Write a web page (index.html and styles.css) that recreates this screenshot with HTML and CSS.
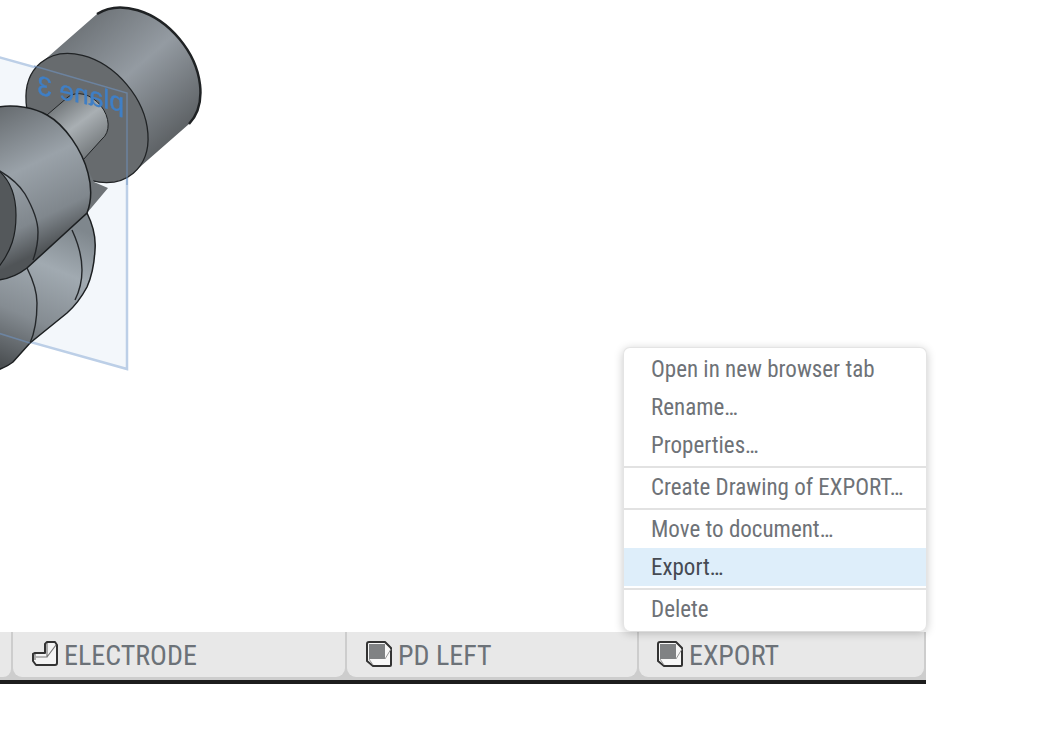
FILE: index.html
```html
<!DOCTYPE html>
<html lang="en">
<head>
<meta charset="utf-8">
<title>Part Studio</title>
<link rel="stylesheet" href="styles.css">
</head>
<body>
<main class="app">
  <section class="viewport">
    <svg class="scene" viewBox="0 0 1053 632" width="1053" height="632" aria-hidden="true">
      <defs>
        <linearGradient id="barrel" gradientUnits="userSpaceOnUse" x1="60" y1="20" x2="172" y2="150">
          <stop offset="0" stop-color="#666b6f"/>
          <stop offset="0.5" stop-color="#949ba2"/>
          <stop offset="1" stop-color="#585c5f"/>
        </linearGradient>
        <linearGradient id="collar" gradientUnits="userSpaceOnUse" x1="10" y1="100" x2="75" y2="235">
          <stop offset="0" stop-color="#656a6e"/>
          <stop offset="0.45" stop-color="#9aa2a9"/>
          <stop offset="0.8" stop-color="#80878d"/>
          <stop offset="1" stop-color="#505457"/>
        </linearGradient>
        <linearGradient id="lower" gradientUnits="userSpaceOnUse" x1="70" y1="225" x2="10" y2="368">
          <stop offset="0" stop-color="#7f878d"/>
          <stop offset="0.3" stop-color="#a1aab1"/>
          <stop offset="0.65" stop-color="#858c92"/>
          <stop offset="1" stop-color="#4b4f52"/>
        </linearGradient>
        <linearGradient id="neck" gradientUnits="userSpaceOnUse" x1="58" y1="100" x2="95" y2="150">
          <stop offset="0" stop-color="#6e7376"/>
          <stop offset="0.5" stop-color="#a9afb3"/>
          <stop offset="1" stop-color="#777c7f"/>
        </linearGradient>
      </defs>
      <polygon class="plane" points="-2,57 127,93 127,369 -2,333"/>
      <path class="lower" d="M87 213 C93 225 96 238 95 250 C94 268 91 278 87 287 C80 300 75 306 67 313 L30 343 L13 362 C8 366 3 368 -2 370 L-2 280 Z"/>
      <path class="edge" d="M72 230 C79 245 82 258 82 270 C82 282 79 292 75 300"/>
      <path class="edge" d="M27 268 C33 280 37 292 37 303 C37 320 35 332 30 343"/>
      <path class="barrel" d="M41 63 L97 14 A72 52 50 0 1 189 124 L133 173 Z"/>
      <path class="rim" d="M97 14 A72 52 50 0 1 189 124"/>
      <ellipse class="face" cx="87" cy="118" rx="72" ry="52" transform="rotate(50 87 118)"/>
      <path class="neck" d="M68 97 A27 20 50 0 1 102 139 L83 160 L47 115 Z"/>
      <path class="shoulder" d="M86 166 L94 182 L108 188 L87 213 Z"/>
      <path class="collar" d="M-2 107 C15 104 35 108 47 115 C65 125 82 150 88 173 C92 188 92 200 87 213 L27 268 C18 275 8 279 -2 280 Z"/>
      <path class="inner" d="M-2 170 C10 180 16 195 16 215 C16 235 12 250 -2 268 Z"/>
      <path class="edge" d="M-2 170 C12 178 20 186 25 194 C33 208 38 220 38 232 C38 245 36 252 33 260"/>
      <text class="plane-label" transform="matrix(-0.98 -0.2 0 1 124 112)">plane 3</text>
      <path class="plane-over" d="M34 66 L127 93 L127 185"/>
      <path class="plane-over" d="M-2 333 L30 343"/>
    </svg>
    <ul class="menu">
      <li class="menu-item">Open in new browser tab</li>
      <li class="menu-item">Rename…</li>
      <li class="menu-item">Properties…</li>
      <li class="menu-sep"></li>
      <li class="menu-item">Create Drawing of EXPORT…</li>
      <li class="menu-sep"></li>
      <li class="menu-item">Move to document…</li>
      <li class="menu-item active">Export…</li>
      <li class="menu-sep"></li>
      <li class="menu-item">Delete</li>
    </ul>
  </section>
  <nav class="tabs">
    <div class="tab stub"></div>
    <div class="tab electrode">
      <svg class="tab-icon" viewBox="0 0 26 26" width="26" height="26" aria-hidden="true">
        <path d="M1 13 L3 12 H13 V3 L15 1 H23 L25 4 V22 Q25 24 23 24 H4 L1 20 Z" fill="#f4f4f4" stroke="#333" stroke-width="2" stroke-linejoin="round"/>
        <path d="M3 13 V19 M15 2 V16 H4 M15 16 L24 4" fill="none" stroke="#777" stroke-width="1.2"/>
      </svg>
      <span>ELECTRODE</span>
    </div>
    <div class="tab pd">
      <svg class="tab-icon" viewBox="0 0 26 26" width="26" height="26" aria-hidden="true">
        <path d="M1 3 Q1 1 3 1 H19 L25 7 V24 Q25 25 24 25 H7 L1 20 Z" fill="#f8f8f8" stroke="#333" stroke-width="2" stroke-linejoin="round"/>
        <rect x="3" y="3" width="16" height="15" fill="#808284"/>
        <path d="M3 18 L7 24 M19 18 L25 8" fill="none" stroke="#999" stroke-width="1"/>
      </svg>
      <span>PD LEFT</span>
    </div>
    <div class="tab export">
      <svg class="tab-icon" viewBox="0 0 26 26" width="26" height="26" aria-hidden="true">
        <path d="M1 3 Q1 1 3 1 H19 L25 7 V24 Q25 25 24 25 H7 L1 20 Z" fill="#f8f8f8" stroke="#333" stroke-width="2" stroke-linejoin="round"/>
        <rect x="3" y="3" width="16" height="15" fill="#808284"/>
        <path d="M3 18 L7 24 M19 18 L25 8" fill="none" stroke="#999" stroke-width="1"/>
      </svg>
      <span>EXPORT</span>
    </div>
  </nav>
  <div class="rule"></div>
</main>
</body>
</html>
```
FILE: styles.css
```css
* { box-sizing: border-box; }
html, body { margin: 0; padding: 0; background: #fff; overflow: hidden; }
body { font-family: "Roboto", "Liberation Sans", sans-serif; font-stretch: 87%; }
.app { width: 1053px; height: 745px; display: flex; flex-direction: column; }
.viewport { position: relative; height: 632px; flex: none; }
.scene { display: block; filter: blur(0.6px); }

.plane { fill: #f3f7fb; stroke: #bccfe7; stroke-width: 2.5; }
.plane-over { fill: none; stroke: #6f93c0; stroke-width: 1.5; opacity: 0.6; }
.plane-label { font-family: "Liberation Sans", sans-serif; font-size: 27px; fill: #3f7fc6; stroke: #3f7fc6; stroke-width: 0.4; }
.barrel { fill: url(#barrel); }
.rim { fill: none; stroke: #1f2224; stroke-width: 2.5; }
.face { fill: #676b6e; stroke: #202325; stroke-width: 1.3; }
.neck { fill: url(#neck); stroke: #202325; stroke-width: 1; }
.shoulder { fill: #6e7377; }
.collar { fill: url(#collar); stroke: #1c1f21; stroke-width: 1.5; }
.lower { fill: url(#lower); stroke: #1c1f21; stroke-width: 1.5; }
.inner { fill: #54585b; stroke: #1c1f21; stroke-width: 1.2; }
.edge { fill: none; stroke: #24272a; stroke-width: 1.4; }

.menu {
  position: absolute; left: 623px; top: 347px; width: 304px; height: 284px;
  margin: 0; padding: 2px 0 0; list-style: none; background: #fff;
  border-radius: 7px; border: 1px solid #e4e4e4; border-bottom: 0;
  box-shadow: 0 2px 10px rgba(0, 0, 0, 0.22); z-index: 2;
}
.menu-item {
  height: 38px; line-height: 40px; padding-left: 27px;
  font-size: 23px; color: #6e7277; white-space: nowrap;
}
.menu-item.active { background: #deeefa; color: #454a52; }
.menu-sep { height: 2px; margin: 2px 0 0; background: #e2e2e2; }

.tabs {
  flex: none; width: 926px; height: 48px; display: flex; gap: 2px;
  background: #cdcdcd; padding-bottom: 3px;
}
.tab {
  display: flex; align-items: center; gap: 6px; background: #e8e8e8;
  border-radius: 0 0 9px 9px; font-size: 28px; color: #6c7278; height: 45px;
}
.tab span { line-height: 1; margin-top: 3px; }
.stub { width: 11px; border-radius: 0 0 8px 0; }
.electrode { width: 332px; padding-left: 19px; }
.pd { width: 290px; padding-left: 19px; }
.export { width: 285px; padding-left: 18px; }
.tab-icon { flex: none; margin-top: -2px; }
.rule { flex: none; width: 926px; height: 4px; background: #1d1d1d; }
```
